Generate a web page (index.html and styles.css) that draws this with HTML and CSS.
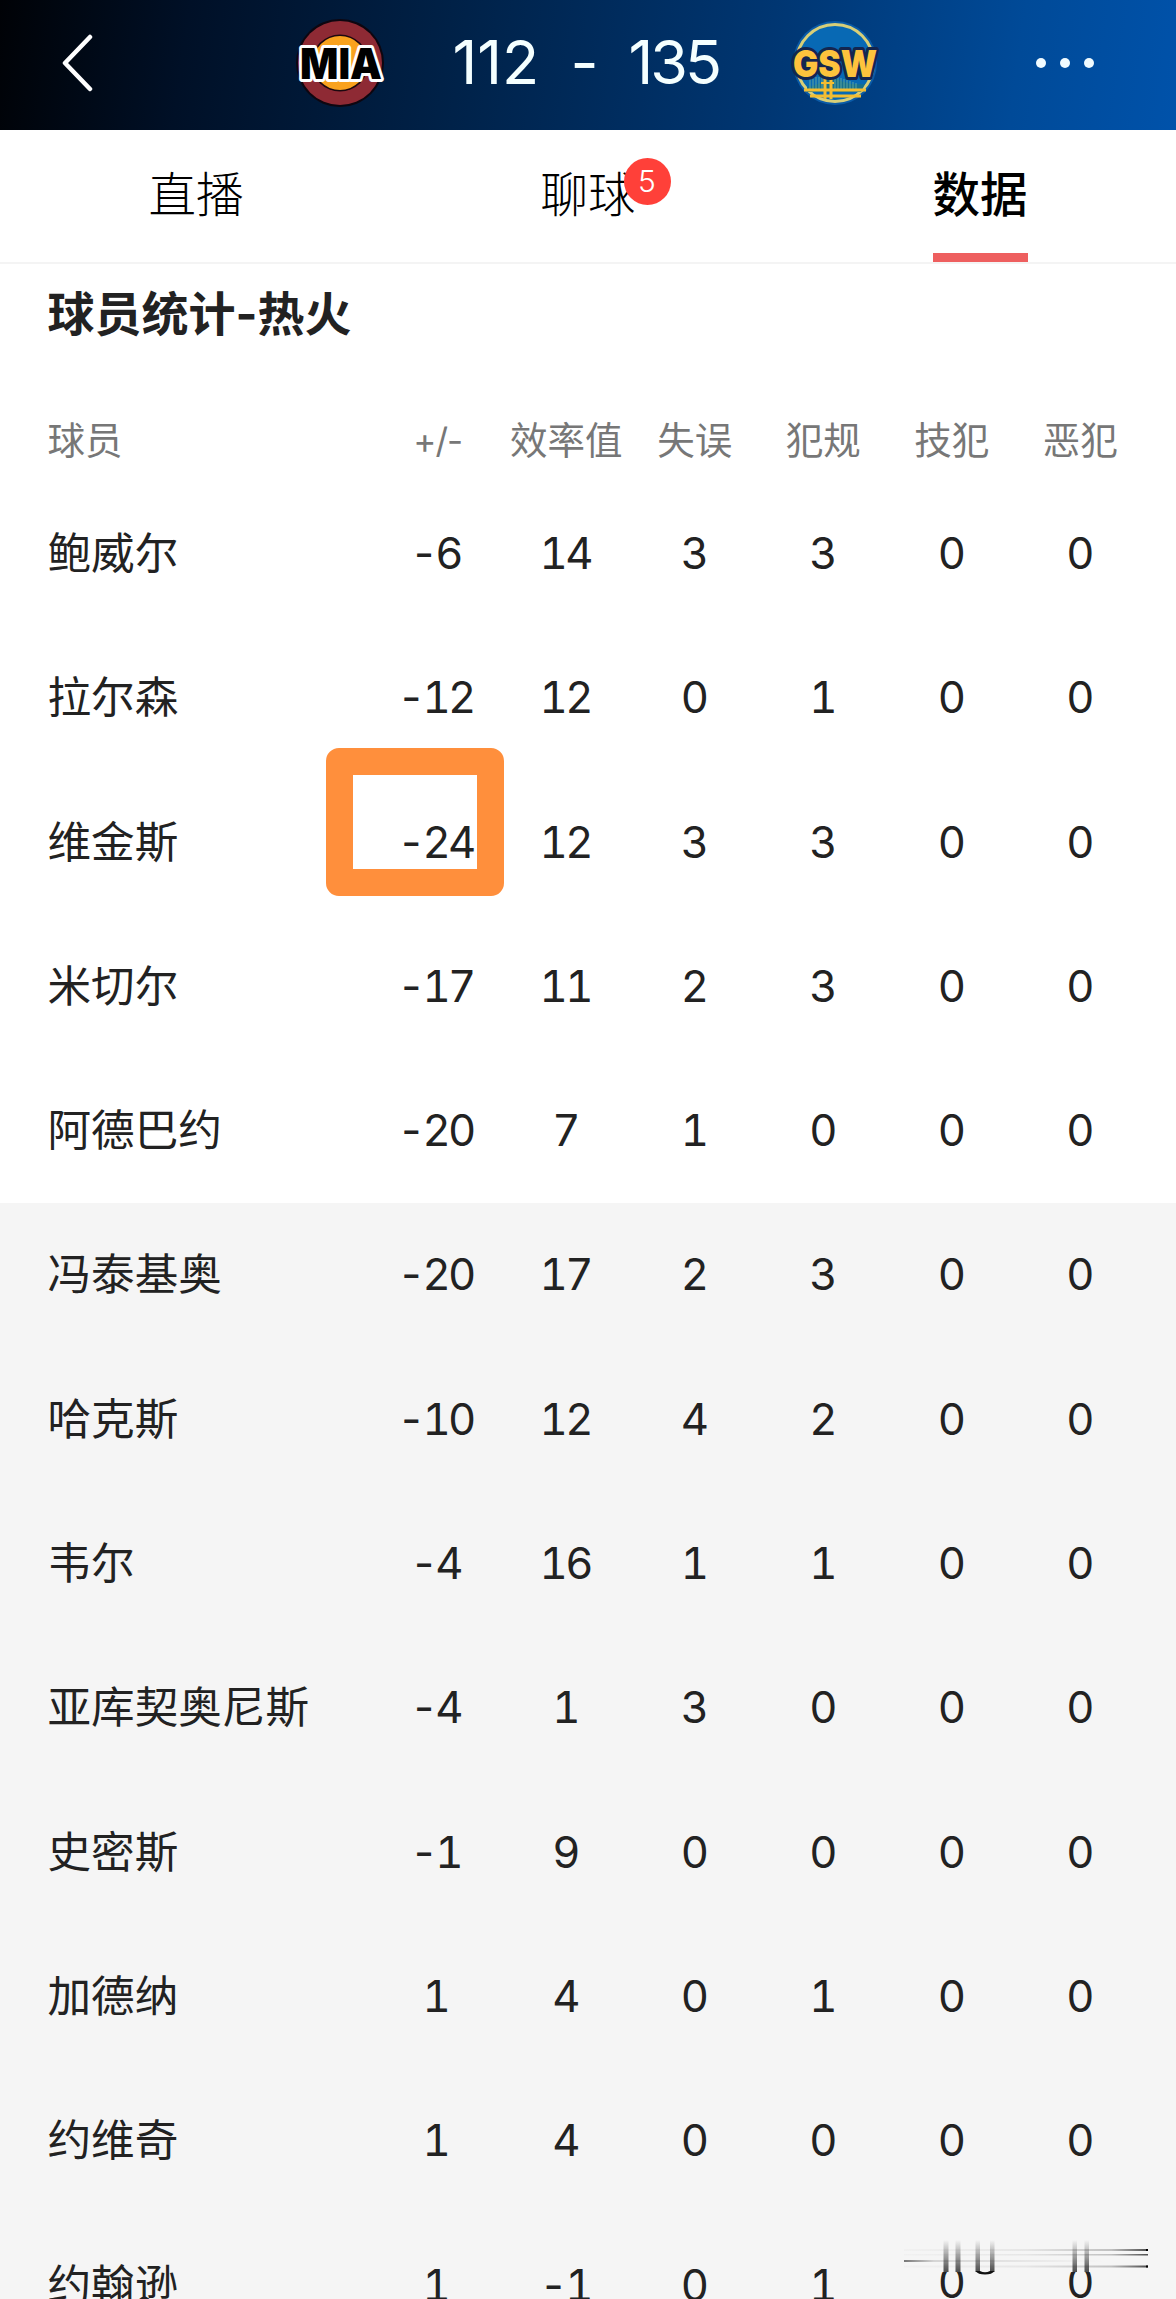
FILE: index.html
```
<!DOCTYPE html>
<html lang="zh-CN">
<head>
  <title>球员统计</title>
  <meta charset="utf-8">
  <link rel="stylesheet" href="styles.css">
</head>
<body>
  <div id="container">
    <div class="header">
      <a href="#" class="back">
        <svg width="32" height="60" viewBox="0 0 32 60"><path d="M29 4L4 30L29 56" fill="none" stroke="#fff" stroke-width="4.5" stroke-linecap="round" stroke-linejoin="round"/></svg>
      </a>
      <div class="match">
        <svg class="logo" width="100" height="100" viewBox="0 0 100 100">
          <circle cx="50" cy="50" r="44" fill="#0d0610"/>
          <circle cx="50" cy="50" r="42" fill="#8e2a34"/>
          <circle cx="50" cy="50" r="28.5" fill="#1c0810"/>
          <circle cx="50" cy="50" r="27" fill="#f9a21e"/>
          <text class="mia" x="51" y="66" textLength="82" lengthAdjust="spacingAndGlyphs">MIA</text>
        </svg>
        <div class="score"><span class="home">112</span><span class="dash">-</span><span class="away">135</span></div>
        <svg class="logo" width="100" height="100" viewBox="0 0 100 100">
          <circle cx="50" cy="50" r="42" fill="#0a5ba8"/>
          <circle cx="50" cy="50" r="38.5" fill="#0869b4" stroke="#d8cf78" stroke-width="3"/>
          <path d="M22 74Q40 71 43 60Q56 73 80 71L76 79H22Z" fill="#17708c"/>
          <path d="M25 66V76M28 66V76M31 64V76M34 64V76M37 62V76M40 61V76M50 62V76M53 64V76M56 65V76M59 66V76M62 67V76M65 68V76M68 69V76M71 70V76" stroke="#5ea69d" stroke-width="1"/>
          <path d="M19 77H81M40 60V86M46 60V86M25 83H76" stroke="#f3bd31" stroke-width="3"/>
          <path d="M36 70H49" stroke="#f3bd31" stroke-width="2"/>
          <text class="gsw" x="50" y="64" textLength="84" lengthAdjust="spacingAndGlyphs">GSW</text>
        </svg>
      </div>
      <a href="#" class="more"><span></span><span></span><span></span></a>
    </div>

    <div class="tabs">
      <a href="#" class="tab">直播</a>
      <a href="#" class="tab"><span class="label">聊球<i class="badge">5</i></span></a>
      <a href="#" class="tab on"><span class="label">数据</span></a>
    </div>

    <h2>球员统计-热火</h2>
    <div class="row head"><span>球员</span><span>+/-</span><span>效率值</span><span>失误</span><span>犯规</span><span>技犯</span><span>恶犯</span></div>

    <div class="starters">
      <div class="row"><span>鲍威尔</span><span>-6</span><span>14</span><span>3</span><span>3</span><span>0</span><span>0</span></div>
      <div class="row"><span>拉尔森</span><span>-12</span><span>12</span><span>0</span><span>1</span><span>0</span><span>0</span></div>
      <div class="row"><span>维金斯</span><span class="marked">-24</span><span>12</span><span>3</span><span>3</span><span>0</span><span>0</span></div>
      <div class="row"><span>米切尔</span><span>-17</span><span>11</span><span>2</span><span>3</span><span>0</span><span>0</span></div>
      <div class="row"><span>阿德巴约</span><span>-20</span><span>7</span><span>1</span><span>0</span><span>0</span><span>0</span></div>
    </div>
    <div class="bench">
      <div class="row"><span>冯泰基奥</span><span>-20</span><span>17</span><span>2</span><span>3</span><span>0</span><span>0</span></div>
      <div class="row"><span>哈克斯</span><span>-10</span><span>12</span><span>4</span><span>2</span><span>0</span><span>0</span></div>
      <div class="row"><span>韦尔</span><span>-4</span><span>16</span><span>1</span><span>1</span><span>0</span><span>0</span></div>
      <div class="row"><span>亚库契奥尼斯</span><span>-4</span><span>1</span><span>3</span><span>0</span><span>0</span><span>0</span></div>
      <div class="row"><span>史密斯</span><span>-1</span><span>9</span><span>0</span><span>0</span><span>0</span><span>0</span></div>
      <div class="row"><span>加德纳</span><span>1</span><span>4</span><span>0</span><span>1</span><span>0</span><span>0</span></div>
      <div class="row"><span>约维奇</span><span>1</span><span>4</span><span>0</span><span>0</span><span>0</span><span>0</span></div>
      <div class="row last"><span>约翰逊</span><span>1</span><span>-1</span><span>0</span><span>1</span><span class="cut">0</span><span class="cut">0</span></div>
    </div>

    <!-- smeared strokes over the last row -->
    <svg class="smear" width="250" height="40" viewBox="0 0 250 40">
      <defs>
        <linearGradient id="down" x1="0" y1="0" x2="0" y2="1">
          <stop offset="0" stop-color="#222" stop-opacity="0"/>
          <stop offset="1" stop-color="#222" stop-opacity=".8"/>
        </linearGradient>
        <linearGradient id="across">
          <stop offset="0" stop-color="#222" stop-opacity=".02"/>
          <stop offset=".5" stop-color="#222" stop-opacity=".07"/>
          <stop offset=".85" stop-color="#222" stop-opacity=".25"/>
          <stop offset="1" stop-color="#222" stop-opacity=".8"/>
        </linearGradient>
        <linearGradient id="back">
          <stop offset="0" stop-color="#222" stop-opacity=".6"/>
          <stop offset=".15" stop-color="#222" stop-opacity=".15"/>
          <stop offset="1" stop-color="#222" stop-opacity="0"/>
        </linearGradient>
      </defs>
      <rect x="35" y="0" width="35" height="32" fill="#f5f5f5"/>
      <rect x="164" y="0" width="35" height="32" fill="#f5f5f5"/>
      <g fill="url(#across)">
        <rect x="4" y="9" width="244" height="2"/>
        <rect x="4" y="14" width="244" height="1.5"/>
        <rect x="4" y="25.5" width="244" height="2"/>
      </g>
      <rect x="4" y="20" width="200" height="2" fill="url(#back)"/>
      <g fill="url(#down)">
        <rect x="43.5" y="0" width="5" height="32"/>
        <rect x="55.5" y="0" width="5" height="32"/>
        <rect x="75.5" y="0" width="4.5" height="32"/>
        <rect x="90" y="0" width="4.5" height="32"/>
        <rect x="172.5" y="0" width="4.5" height="32"/>
        <rect x="184.5" y="0" width="4.5" height="32"/>
      </g>
      <path d="M75.5 31H80Q85 33.5 90 31H94.5Q92 34.5 85 34.5Q78 34.5 75.5 31Z" fill="#111"/>
      <path d="M246 10H248M246 26.5H248" stroke="#000" stroke-width="2"/>
    </svg>
  </div>
</body>
</html>
```

FILE: styles.css
```
*{
  padding:0;
  margin:0;
  box-sizing:border-box;
}
body{
  background:#fff;
  font-family:Inter,"Noto Sans CJK SC",sans-serif;
}
a{
  color:inherit;
  text-decoration:none;
}
#container{
  width:1176px;
  height:2299px;
  position:relative;
  overflow:hidden;
}
.header{
  display:flex;
  align-items:center;
  height:130px;
  padding:0 82px 4px 61px;
  background:linear-gradient(98deg,#000206 0%,#001027 16%,#002147 38%,#003672 65%,#004a98 86%,#0052aa 100%);
}
.header svg{
  display:block;
}
.match{
  display:flex;
  align-items:center;
  width:595px;
  margin-left:197px;
  justify-content:space-between;
}
.mia,.gsw{
  font-weight:900;
  font-size:43px;
  text-anchor:middle;
  paint-order:stroke;
  stroke-linejoin:round;
}
.mia{
  fill:#000;
  stroke:#fff;
  stroke-width:6px;
}
.gsw{
  font-size:37px;
  fill:#fdc33d;
  stroke:#132650;
  stroke-width:6px;
}
.score{
  display:flex;
  width:276px;
  font-size:61px;
  line-height:86px;
  padding-bottom:3px;
  color:#f4ffff;
}
.home{
  width:121px;
  padding-left:3px;
}
.dash{
  width:58px;
}
.away{
  letter-spacing:-3px;
}
.more{
  display:flex;
  gap:14px;
  margin-left:auto;
}
.more span{
  width:10px;
  height:10px;
  border-radius:50%;
  background:#f0fbff;
}
.tabs{
  display:flex;
  height:134px;
  border-bottom:2px solid #f4f4f4;
}
.tab{
  flex:1;
  text-align:center;
  font-size:47.5px;
  font-weight:300;
  line-height:130px;
  color:#000;
}
.label{
  display:inline-block;
  position:relative;
  height:132px;
}
.on{
  font-weight:500;
}
.on .label{
  border-bottom:9px solid #ee5f5f;
}
.badge{
  position:absolute;
  left:83px;
  top:28px;
  width:47px;
  height:47px;
  border-radius:50%;
  background:#ff4039;
  color:#fff;
  font-style:normal;
  font-size:30px;
  line-height:47px;
}
h2{
  height:137.5px;
  padding-left:47.5px;
  font-size:47px;
  line-height:100px;
  color:#222;
}
.row{
  display:grid;
  grid-template-columns:1fr repeat(6,128.5px);
  height:144.3px;
  padding:0 31.5px 0 47.5px;
  font-size:43.6px;
  line-height:144px;
  color:#222;
  text-align:center;
}
.row span{
  position:relative;
  left:-1px;
  letter-spacing:-2.5px;
  font-variant-numeric:tabular-nums;
  white-space:nowrap;
}
.row span:first-child{
  left:0;
  text-align:left;
  letter-spacing:0;
}
.row span:nth-child(2){
  left:-2.5px;
  letter-spacing:-3px;
}
.head{
  height:80.5px;
  font-size:37.5px;
  line-height:77px;
  color:#777;
}
.row.head span{
  left:0;
  letter-spacing:0;
  font-variant-numeric:normal;
}
.row.head span:nth-child(2){
  font-size:35px;
  letter-spacing:-1px;
}
.bench{
  background:#f5f5f5;
}
/* hand drawn frame around the value */
.marked:before{
  content:"";
  position:absolute;
  box-sizing:border-box;
  left:-45px;
  top:-23px;
  width:178px;
  height:148px;
  border:27px solid #ff8f3c;
  border-radius:13px;
}
.row .cut{
  top:-3px;
}
.smear{
  position:absolute;
  left:900px;
  top:2240px;
}
```
